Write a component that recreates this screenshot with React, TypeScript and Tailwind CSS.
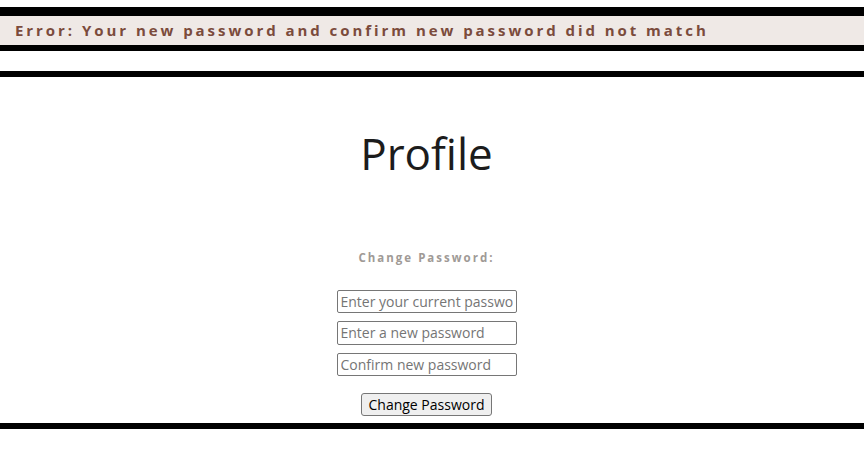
export default function App() {
  return (
    <div className="min-h-[456px] bg-white font-['Open_Sans',sans-serif]">
      <div className="h-[7px]" />
      {/* error banner */}
      <div className="border-t-[9px] border-b-[6px] border-black bg-[#efe9e6] h-[44px] flex items-center pl-[15px]">
        <span className="text-[15px] font-bold tracking-[2.95px] text-[#7b4b3c] leading-none">
          Error: Your new password and confirm new password did not match
        </span>
      </div>
      <div className="h-[20px]" />
      <div className="border-t-[6px] border-b-[6px] border-black">
        <div className="flex flex-col items-center pt-[54px] pb-[7px] pr-[11px]">
          <h1 className="text-[44px] leading-none text-[#1c1c1c]">Profile</h1>
          <div className="mt-[77px] text-[11.5px] font-bold tracking-[2px] text-[#a09a96] leading-none">
            Change Password:
          </div>
          <form className="mt-[26px] flex flex-col items-center gap-[8px]">
            <input
              type="password"
              placeholder="Enter your current password"
              className="w-[180px] h-[23.5px] border border-[#767676] rounded-[2px] px-[3px] text-[14px] placeholder:text-[#757575] outline-none"
            />
            <input
              type="password"
              placeholder="Enter a new password"
              className="w-[180px] h-[23.5px] border border-[#767676] rounded-[2px] px-[3px] text-[14px] placeholder:text-[#757575] outline-none"
            />
            <input
              type="password"
              placeholder="Confirm new password"
              className="w-[180px] h-[23.5px] border border-[#767676] rounded-[2px] px-[3px] text-[14px] placeholder:text-[#757575] outline-none"
            />
            <button
              type="button"
              className="mt-[9px] h-[23px] px-[7px] border border-[#767676] rounded-[3px] bg-[#efefef] text-[14px] text-black leading-none"
            >
              Change Password
            </button>
          </form>
        </div>
      </div>
    </div>
  );
}
